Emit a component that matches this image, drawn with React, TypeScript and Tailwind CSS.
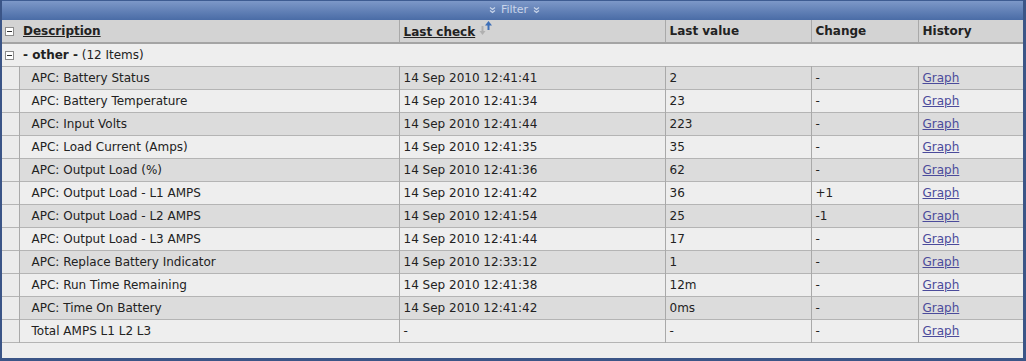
import React from 'react';

const rows = [
  ['APC: Battery Status', '14 Sep 2010 12:41:41', '2', '-'],
  ['APC: Battery Temperature', '14 Sep 2010 12:41:34', '23', '-'],
  ['APC: Input Volts', '14 Sep 2010 12:41:44', '223', '-'],
  ['APC: Load Current (Amps)', '14 Sep 2010 12:41:35', '35', '-'],
  ['APC: Output Load (%)', '14 Sep 2010 12:41:36', '62', '-'],
  ['APC: Output Load - L1 AMPS', '14 Sep 2010 12:41:42', '36', '+1'],
  ['APC: Output Load - L2 AMPS', '14 Sep 2010 12:41:54', '25', '-1'],
  ['APC: Output Load - L3 AMPS', '14 Sep 2010 12:41:44', '17', '-'],
  ['APC: Replace Battery Indicator', '14 Sep 2010 12:33:12', '1', '-'],
  ['APC: Run Time Remaining', '14 Sep 2010 12:41:38', '12m', '-'],
  ['APC: Time On Battery', '14 Sep 2010 12:41:42', '0ms', '-'],
  ['Total AMPS L1 L2 L3', '-', '-', '-'],
];

function MinusBox() {
  return (
    <span className="inline-flex w-[9px] h-[9px] border border-[#8c8c8c] bg-white items-center justify-center align-middle">
      <span className="block w-[5px] h-px bg-[#333]" />
    </span>
  );
}

function Chevrons() {
  return (
    <svg width="7" height="7" viewBox="0 0 7 7" className="inline-block">
      <path d="M1 0.5 L3.5 2.5 L6 0.5 M1 3.5 L3.5 5.5 L6 3.5" stroke="#c9d5ea" strokeWidth="1.2" fill="none" />
    </svg>
  );
}

function SortIcon() {
  return (
    <svg width="16" height="16" viewBox="0 0 16 16" className="inline-block ml-[3px] w-[16px] h-[16px] align-[-1px]">
      <path d="M4.5 5 V11" stroke="#b0b0b0" strokeWidth="2" />
      <path d="M1.5 10 L4.5 14 L7.5 10 Z" fill="#b0b0b0" />
      <path d="M10.5 3 V9" stroke="#3d6fb8" strokeWidth="2" />
      <path d="M7 4.5 L10.5 0 L14 4.5 Z" fill="#3d6fb8" />
    </svg>
  );
}

export default function App() {
  const cell = 'border-l border-[#a9a9a9] px-[4px] h-[23px] align-middle';
  return (
    <div
      className="w-[1026px] h-[361px] bg-[#eeeeee] border-l-2 border-r-[3px] border-b-[3px] border-[#3b5587] overflow-hidden text-[12px] text-[#222]"
      style={{ fontFamily: '"DejaVu Sans", Verdana, sans-serif' }}
    >
      <div className="h-[20px] border-t border-[#3e5c92] bg-gradient-to-b from-[#7d98c8] to-[#4a6ca6] flex items-center justify-center gap-[5px] text-[#c9d5ea] pl-[4px]">
        <Chevrons />
        <span className="text-[11px]">Filter</span>
        <Chevrons />
      </div>
      <table className="w-full border-collapse table-fixed">
        <colgroup>
          <col className="w-[17px]" />
          <col className="w-[380px]" />
          <col className="w-[266px]" />
          <col className="w-[146px]" />
          <col className="w-[107px]" />
          <col />
        </colgroup>
        <thead>
          <tr className="bg-[#d3d3d3] border-b-2 border-[#a4a4a4] font-bold text-left">
            <th className="h-[22px] pl-[3px] align-middle"><MinusBox /></th>
            <th className="px-[4px] align-middle"><span className="underline">Description</span></th>
            <th className={cell}><span className="underline">Last check</span><SortIcon /></th>
            <th className={cell}>Last value</th>
            <th className={cell}>Change</th>
            <th className={cell}>History</th>
          </tr>
        </thead>
        <tbody>
          <tr className="bg-[#eeeeee] border-b border-[#b4b4b4]">
            <td className="h-[23px] pl-[3px] align-middle"><MinusBox /></td>
            <td colSpan={5} className="px-[4px] align-middle">
              <b>- other -</b> (12 Items)
            </td>
          </tr>
          {rows.map((r, i) => (
            <tr key={i} className={`border-b border-[#b4b4b4] ${i % 2 === 0 ? 'bg-[#dcdcdc]' : 'bg-[#eeeeee]'}`}>
              <td className="h-[23px] bg-[#ebebeb]" />
              <td className={cell + ' pl-[12px]'}>{r[0]}</td>
              <td className={cell}>{r[1]}</td>
              <td className={cell}>{r[2]}</td>
              <td className={cell}>{r[3]}</td>
              <td className={cell}>
                <a className="underline text-[#4b4b9b]" href="#">Graph</a>
              </td>
            </tr>
          ))}
        </tbody>
      </table>
    </div>
  );
}
